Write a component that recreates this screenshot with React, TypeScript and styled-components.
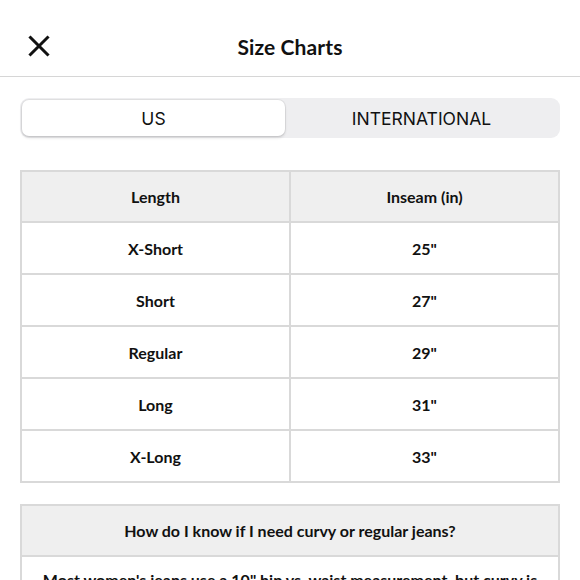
import React, { useState } from "react";
import styled, { createGlobalStyle } from "styled-components";

const GlobalStyle = createGlobalStyle`
  html, body {
    margin: 0;
    padding: 0;
    background: #fff;
  }
  body {
    font-family: "Lato", "Noto Sans", sans-serif;
    color: #111;
  }
  *, *::before, *::after {
    box-sizing: border-box;
  }
`;

const Page = styled.div`
  width: 580px;
  height: 580px;
  overflow: hidden;
  background: #fff;
`;

const Header = styled.header`
  position: relative;
  display: flex;
  align-items: center;
  justify-content: center;
  height: 77px;
  padding-top: 16px;
  border-bottom: 1px solid #d6d6d6;
`;

const CloseButton = styled.button`
  position: absolute;
  left: 27px;
  top: 34px;
  width: 24px;
  height: 24px;
  padding: 0;
  border: 0;
  background: none;
  display: flex;
  align-items: center;
  justify-content: center;
  cursor: pointer;
`;

const Title = styled.h1`
  margin: 0;
  font-size: 21px;
  font-weight: 700;
  letter-spacing: 0.1px;
  color: #111;
`;

const Content = styled.main`
  padding: 21px 20px 0;
  display: flex;
  flex-direction: column;
`;

const Segmented = styled.div`
  display: grid;
  grid-template-columns: 263px 1fr;
  height: 40px;
  padding: 2px;
  border-radius: 9px;
  background: #eeeef0;
  margin-bottom: 32px;
`;

const Segment = styled.button<{ $active: boolean }>`
  border: 0;
  border-radius: 7px;
  font-family: "Inter", "Roboto", sans-serif;
  font-size: 17.5px;
  font-weight: 400;
  color: #111;
  cursor: pointer;
  background: ${({ $active }) => ($active ? "#fff" : "transparent")};
  box-shadow: ${({ $active }) =>
    $active ? "0 0 0 1px rgba(0,0,0,0.06), 0 2px 3px rgba(0,0,0,0.12)" : "none"};
`;

const Table = styled.table`
  width: 100%;
  border-collapse: collapse;
  table-layout: fixed;
  border: 2px solid #d9d9d9;
  margin-bottom: 21px;
`;

const HeadCell = styled.th`
  height: 51px;
  background: #efefef;
  border: 2px solid #d9d9d9;
  font-size: 16px;
  font-weight: 700;
  color: #111;
  text-align: center;
`;

const Cell = styled.td`
  height: 52px;
  border: 2px solid #d9d9d9;
  font-size: 16px;
  font-weight: 700;
  text-align: center;
  color: #111;
`;

const NoteCell = styled.td`
  border: 2px solid #d9d9d9;
  padding: 12px 20px;
  font-size: 16px;
  font-weight: 700;
  line-height: 22px;
  text-align: center;
  color: #111;
`;

const rows = [
  ["X-Short", '25"'],
  ["Short", '27"'],
  ["Regular", '29"'],
  ["Long", '31"'],
  ["X-Long", '33"'],
];

export default function App() {
  const [tab, setTab] = useState(0);
  return (
    <Page>
      <GlobalStyle />
      <Header>
        <CloseButton aria-label="Close">
          <svg width="22" height="22" viewBox="0 0 22 22">
            <path
              d="M2.5 2.5 L19.5 19.5 M19.5 2.5 L2.5 19.5"
              stroke="#111"
              strokeWidth="3"
              strokeLinecap="square"
            />
          </svg>
        </CloseButton>
        <Title>Size Charts</Title>
      </Header>
      <Content>
        <Segmented>
          {["US", "INTERNATIONAL"].map((label, i) => (
            <Segment key={label} $active={tab === i} onClick={() => setTab(i)}>
              {label}
            </Segment>
          ))}
        </Segmented>
        <Table>
          <thead>
            <tr>
              <HeadCell>Length</HeadCell>
              <HeadCell>Inseam (in)</HeadCell>
            </tr>
          </thead>
          <tbody>
            {rows.map(([len, ins]) => (
              <tr key={len}>
                <Cell>{len}</Cell>
                <Cell>{ins}</Cell>
              </tr>
            ))}
          </tbody>
        </Table>
        <Table>
          <thead>
            <tr>
              <HeadCell>How do I know if I need curvy or regular jeans?</HeadCell>
            </tr>
          </thead>
          <tbody>
            <tr>
              <NoteCell>
                Most women's jeans use a 10" hip vs. waist measurement, but curvy is
                designed for a 12" difference between hip and waist.
              </NoteCell>
            </tr>
          </tbody>
        </Table>
      </Content>
    </Page>
  );
}
